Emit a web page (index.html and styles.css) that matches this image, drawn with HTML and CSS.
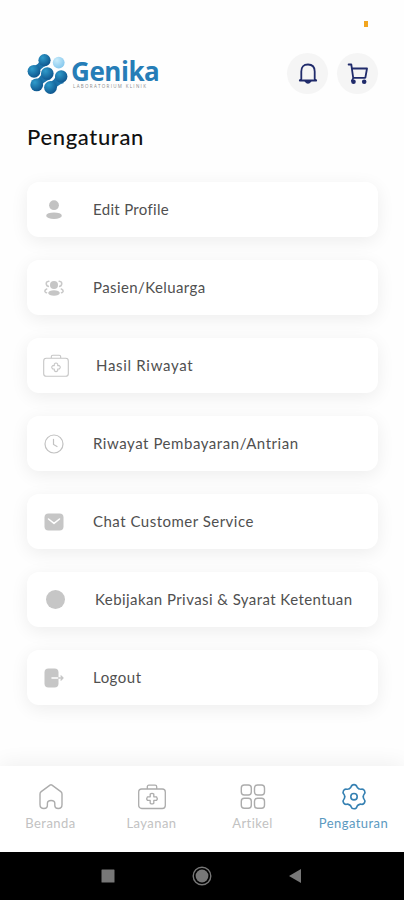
FILE: index.html
```html
<!DOCTYPE html>
<html lang="id">
<head>
<meta charset="utf-8">
<meta name="viewport" content="width=device-width, initial-scale=1">
<title>Genika - Pengaturan</title>
<link rel="stylesheet" href="styles.css">
</head>
<body>
<div class="app">
  <div class="status"><span class="indicator"></span></div>
  <header class="header">
    <div class="logo">
      <svg class="logo-mark" width="41" height="42" viewBox="0 0 41 42">
        <defs>
          <radialGradient id="node" cx=".35" cy=".3" r=".8"><stop offset="0" stop-color="#2f9bcb"/><stop offset="1" stop-color="#0b4f88"/></radialGradient>
          <radialGradient id="light" cx=".35" cy=".3" r=".8"><stop offset="0" stop-color="#c9ecfb"/><stop offset="1" stop-color="#7fc4ec"/></radialGradient>
          <linearGradient id="link" x1="1" y1="0" x2="0" y2="1"><stop offset="0" stop-color="#2685bb"/><stop offset="1" stop-color="#0f5a92"/></linearGradient>
        </defs>
        <g fill="url(#link)">
          <path d="M13 5Q13 13 3 14L10 23Q12 15 21 12Z"/>
          <path d="M15 19Q14 26 6 27L13 36Q16 28 24 26Z"/>
          <path d="M29 21Q28 29 20 30L27 39Q29 32 37 30Z"/>
        </g>
        <g fill="url(#node)">
          <circle cx="17.5" cy="7.2" r="6.1"/><circle cx="7" cy="18.3" r="6.4"/>
          <circle cx="20.3" cy="20.5" r="6.3"/><circle cx="34.2" cy="23.5" r="6.2"/>
          <circle cx="9.7" cy="31.9" r="6.4"/><circle cx="23.5" cy="34.5" r="6.4"/>
        </g>
        <circle cx="31.7" cy="9.6" r="5.9" fill="url(#light)"/>
      </svg>
      <div class="logo-text"><span class="brand">Genika</span><span class="tagline">LABORATORIUM KLINIK</span></div>
    </div>
    <div class="actions">
      <button class="round" aria-label="Notifikasi">
        <svg width="20" height="22" viewBox="0 0 20 22" fill="none" stroke="#202b6b" stroke-width="1.8" stroke-linecap="round" stroke-linejoin="round"><path d="M3.3 16V8.5Q3.3 1.5 10 1.5T16.7 8.5V16L18.2 17.5H1.8Z"/><path d="M7.5 18.3Q10 21.5 12.5 18.3Z" fill="#202b6b"/></svg>
      </button>
      <button class="round" aria-label="Keranjang">
        <svg width="22" height="22" viewBox="0 0 22 22" fill="none" stroke="#202b6b" stroke-width="1.8" stroke-linecap="round" stroke-linejoin="round"><path d="M1.6 1.5H4.3L6.2 14.8H18M5 5.5H20L18.4 14.5M6.4 14.8L4.8 17.8"/><circle cx="6.5" cy="18.8" r="1.4" fill="#202b6b"/><circle cx="17.2" cy="18.8" r="1.4" fill="#202b6b"/></svg>
      </button>
    </div>
  </header>
  <h1 class="title">Pengaturan</h1>
  <main class="list">
    <a class="card"><span class="icon"><svg width="20" height="22" viewBox="0 0 20 22" fill="#c2c2c2"><circle cx="10" cy="6.2" r="4.9"/><ellipse cx="10" cy="16.7" rx="7.8" ry="3.3"/></svg></span><span class="label edit">Edit Profile</span></a>
    <a class="card"><span class="icon"><svg width="20" height="18" viewBox="0 0 20 18" fill="#c6c6c6"><circle cx="10" cy="6" r="4"/><ellipse cx="10" cy="14" rx="5.8" ry="2.8"/><g fill="none" stroke="#c9c9c9" stroke-width="1.6" stroke-linecap="round"><path d="M4.8 2.2Q2 2.5 2.3 5.2 2.5 7 4.3 7.4M15.2 2.2Q18 2.5 17.7 5.2 17.5 7 15.7 7.4M2.7 10Q.5 11 1 12.5 1.4 13.5 2.5 13.7M17.3 10Q19.5 11 19 12.5 18.6 13.5 17.5 13.7"/></g></svg></span><span class="label family">Pasien/Keluarga</span></a>
    <a class="card"><span class="icon wide"><svg width="28" height="24" viewBox="0 0 28 24" fill="none" stroke="#c6c6c6" stroke-width="1.1"><rect x="1.7" y="4.3" width="24.6" height="18" rx="2.6"/><path d="M9.3 4V2.8Q9.3 1.3 10.8 1.3H17.2Q18.7 1.3 18.7 2.8V4"/><path d="M12.3 10Q14 8 15.7 10V11.6H17.3Q19.3 13.3 17.3 15H15.7V16.6Q14 18.6 12.3 16.6V15H10.7Q8.7 13.3 10.7 11.6H12.3Z" stroke-linejoin="round"/></svg></span><span class="label result">Hasil Riwayat</span></a>
    <a class="card"><span class="icon"><svg width="20" height="20" viewBox="0 0 20 20" fill="none" stroke="#c2c2c2" stroke-width="1.2" stroke-linecap="round"><circle cx="10" cy="10" r="9"/><path d="M9.5 5.3V10.5L13 12.5"/></svg></span><span class="label payment">Riwayat Pembayaran/Antrian</span></a>
    <a class="card"><span class="icon"><svg width="20" height="18" viewBox="0 0 20 18"><rect x=".5" y=".5" width="19" height="17" rx="4" fill="#c6c6c6"/><path d="M4.5 6L10 10.4 15.5 6" fill="none" stroke="#fff" stroke-width="1.6" stroke-linecap="round" stroke-linejoin="round"/></svg></span><span class="label chat">Chat Customer Service</span></a>
    <a class="card"><span class="icon privacy-icon"><span class="dot"></span></span><span class="label privacy">Kebijakan Privasi &amp; Syarat Ketentuan</span></a>
    <a class="card"><span class="icon"><svg width="20" height="20" viewBox="0 0 20 20"><rect x=".5" y=".5" width="14" height="19" rx="4" fill="#c6c6c6"/><path d="M8 10H14.5" stroke="#fff" stroke-width="1.5" stroke-linecap="round"/><path d="M14.5 10H19M17 8L19 10 17 12" fill="none" stroke="#c6c6c6" stroke-width="1.3" stroke-linecap="round" stroke-linejoin="round"/></svg></span><span class="label logout">Logout</span></a>
  </main>
  <nav class="tabs">
    <a class="tab"><svg width="28" height="28" viewBox="0 0 28 28" fill="none" stroke="#acacac" stroke-width="1.4" stroke-linejoin="round"><path d="M13 2.1Q14 1.4 15 2.1L23.8 8.6Q25 9.5 25 11V21.5Q25 25.5 21.3 25.5 17.8 25.5 17.8 22.3V20.3Q17.8 17.5 14.1 17.5T10.4 20.3V22.3Q10.4 25.5 6.9 25.5 3 25.5 3 21.5V11Q3 9.5 4.2 8.6Z"/></svg><span class="beranda">Beranda</span></a>
    <a class="tab"><svg width="30" height="28" viewBox="0 0 30 28" fill="none" stroke="#acacac" stroke-width="1.3" stroke-linejoin="round"><rect x="1.7" y="6" width="26.6" height="19.5" rx="3"/><path d="M10.3 6V3.8Q10.3 2.2 11.9 2.2H18.1Q19.7 2.2 19.7 3.8V6"/><path d="M13.2 11Q15 9.6 16.8 11V13.8H19.6Q21 15.6 19.6 17.4H16.8V20.2Q15 21.6 13.2 20.2V17.4H10.4Q9 15.6 10.4 13.8H13.2Z"/></svg><span class="layanan">Layanan</span></a>
    <a class="tab"><svg width="28" height="28" viewBox="0 0 28 28" fill="none" stroke="#acacac" stroke-width="1.4"><rect x="2.3" y="2" width="10" height="10" rx="3"/><rect x="15.5" y="2" width="10" height="10" rx="3"/><rect x="2.3" y="15.2" width="10" height="10" rx="3"/><rect x="15.5" y="15.2" width="10" height="10" rx="3"/></svg><span class="artikel">Artikel</span></a>
    <a class="tab active"><svg width="28" height="28" viewBox="-14 -13.7 28 28" fill="none" stroke="#3580b2" stroke-width="1.6" stroke-linecap="round"><defs><path id="lobe" d="M-4.65 -8.05Q-3.2 -8.9 -2.9 -10Q-2.3 -12.1 0 -12.1T2.9 -10Q3.2 -8.9 4.65 -8.05"/></defs><path d="M-4.65 -8.05Q-3.2 -8.9 -2.9 -10Q-2.3 -12.1 0 -12.1Q2.3 -12.1 2.9 -10Q3.2 -8.9 4.65 -8.05" id="tooth"/><use href="#tooth" transform="rotate(60)"/><use href="#tooth" transform="rotate(120)"/><use href="#tooth" transform="rotate(180)"/><use href="#tooth" transform="rotate(240)"/><use href="#tooth" transform="rotate(300)"/><circle r="3.2"/></svg><span class="pengaturan">Pengaturan</span></a>
  </nav>
  <div class="system">
    <svg width="14" height="14"><rect x=".5" y=".5" width="13" height="13" rx=".6" fill="#777"/></svg>
    <svg width="20" height="20"><circle cx="10" cy="10" r="8.8" fill="none" stroke="#777" stroke-width="1.4"/><circle cx="10" cy="10" r="6.4" fill="#777"/></svg>
    <svg width="14" height="16"><path d="M1 8L13 1V15Z" fill="#777"/></svg>
  </div>
</div>
</body>
</html>
```
FILE: styles.css
```css
* { box-sizing: border-box; }

body {
  margin: 0;
  background: #fefefe;
  font-family: Lato, "Noto Sans", sans-serif;
}

.app {
  display: flex;
  flex-direction: column;
  width: 404px;
  height: 900px;
  overflow: hidden;
}

.status {
  display: flex;
  justify-content: flex-end;
  height: 52px;
  padding: 21px 36px 0 0;
}

.indicator {
  width: 4px;
  height: 6px;
  background: #f2a51f;
}

.header {
  display: flex;
  justify-content: space-between;
  height: 43px;
  padding: 1px 26px 0 27px;
}

.logo { display: flex; }

.logo-text {
  display: flex;
  flex-direction: column;
  padding: 0 0 0 3px;
}

.brand {
  height: 31px;
  color: #267db7;
  font: 700 26px/36px "Open Sans", sans-serif;
  letter-spacing: -0.45px;
}

.tagline {
  padding-left: 2px;
  color: #8a8a8a;
  font: 4.5px/5px "Open Sans", sans-serif;
  letter-spacing: 1.3px;
  white-space: nowrap;
}

.actions {
  display: flex;
  gap: 9px;
}

.round {
  display: flex;
  align-items: center;
  justify-content: center;
  width: 41px;
  height: 41px;
  padding: 0;
  border: 0;
  border-radius: 50%;
  background: #f5f5f5;
}

.title {
  height: 87px;
  margin: 0;
  padding: 28px 27px 0;
  color: #111;
  font-size: 22px;
  font-weight: 500;
  line-height: 28px;
  letter-spacing: 0.65px;
}

.list {
  display: flex;
  flex: 1;
  flex-direction: column;
  gap: 23px;
  padding: 0 26px 0 27px;
}

.card {
  display: flex;
  align-items: center;
  height: 55px;
  border-radius: 12px;
  background: #fff;
  box-shadow: 0 4px 18px rgba(0, 0, 0, 0.07);
}

.icon {
  display: flex;
  justify-content: center;
  width: 20px;
  margin: 0 29px 0 17px;
}

.icon.wide {
  width: 28px;
  margin: 0 26px 0 15px;
}

.privacy-icon { margin: 0 30px 0 18px; }

.dot {
  width: 19px;
  height: 19px;
  border-radius: 50%;
  background: #c6c6c6;
}

.label {
  padding-bottom: 1px;
  color: #505050;
  font-size: 15px;
  line-height: 20px;
  white-space: nowrap;
}

.edit { letter-spacing: 0.32px; }
.family { letter-spacing: 0.4px; }
.result { letter-spacing: 0.7px; }
.payment { letter-spacing: 0.55px; }
.chat { letter-spacing: 0.49px; }
.privacy { letter-spacing: 0.43px; }
.logout { letter-spacing: 0.5px; }

.tabs {
  display: grid;
  grid-template-columns: repeat(4, 1fr);
  height: 86px;
  background: #fff;
  box-shadow: 0 -3px 20px rgba(0, 0, 0, 0.06);
}

.tab {
  display: flex;
  flex-direction: column;
  align-items: center;
  padding-top: 17px;
  color: #c2c2c2;
  font-size: 13px;
  line-height: 16px;
}

.tab span { margin-top: 4px; letter-spacing: 0.45px; }

.tab.active { color: #5b99bf; }

.system {
  display: flex;
  align-items: center;
  justify-content: space-between;
  height: 48px;
  padding: 0 102px 0 101px;
  background: #000;
}
```
